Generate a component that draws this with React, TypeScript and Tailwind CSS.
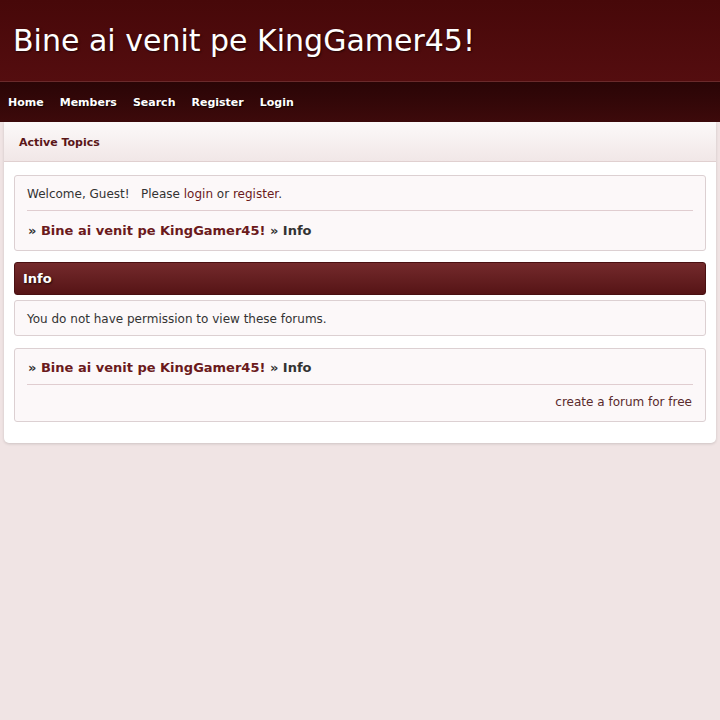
import React from "react";

const Breadcrumb = () => (
  <div className="text-[13px] font-bold text-[#333] leading-[16px]">
    » <a className="text-[#6b1a1c]">Bine ai venit pe KingGamer45!</a> » Info
  </div>
);

const App = () => {
  return (
    <div className="min-h-[720px] bg-[#f0e4e4] font-['DejaVu_Sans',sans-serif]">
      <div className="h-[82px] bg-gradient-to-b from-[#470809] to-[#540d0f] border-b border-[#6a2a2b] flex items-center px-[13px]">
        <h1 className="text-[30px] text-white leading-none pt-[1px] [text-shadow:1px_1px_2px_rgba(0,0,0,0.6)]">
          Bine ai venit pe KingGamer45!
        </h1>
      </div>
      <nav className="h-[40px] bg-gradient-to-b from-[#2a0506] to-[#3d0a0b] flex items-center gap-[16px] px-[8px] pt-[2px]">
        {["Home", "Members", "Search", "Register", "Login"].map((n) => (
          <a key={n} className="text-[11px] font-bold text-white [text-shadow:1px_1px_1px_rgba(0,0,0,0.8)]">
            {n}
          </a>
        ))}
      </nav>
      <div className="mx-[4px] bg-white rounded-b-[5px] shadow-[0_1px_3px_rgba(0,0,0,0.15)] pb-[21px]">
        <div className="h-[40px] bg-gradient-to-b from-[#fcf9f9] to-[#f1e7e7] border-b border-[#e0d0d0] flex items-center px-[15px] pt-[3px]">
          <span className="text-[11px] font-bold text-[#5a1618]">Active Topics</span>
        </div>
        <div className="px-[10px] pt-[13px] flex flex-col">
          <div className="bg-[#fcf8f9] border border-[#dcd0d2] rounded-[3px] px-[12px] pt-[10px] pb-[11px]">
            <div className="text-[12px] text-[#333] leading-[16px]">
              Welcome, Guest!&nbsp;&nbsp; Please <a className="text-[#6b1a1c]">login</a> or{" "}
              <a className="text-[#6b1a1c]">register</a>.
            </div>
            <div className="border-t border-[#e0cdd0] mt-[8px] mb-[12px]" />
            <div className="pl-[1px]">
              <Breadcrumb />
            </div>
          </div>
          <div className="mt-[11px] h-[33px] rounded-[3px] bg-gradient-to-b from-[#742a2c] to-[#561416] border border-[#4a1012] flex items-center px-[8px]">
            <span className="text-[13px] font-bold text-white [text-shadow:1px_1px_2px_rgba(0,0,0,0.7)]">Info</span>
          </div>
          <div className="mt-[5px] h-[36px] bg-[#fcf8f9] border border-[#dcd0d2] rounded-[3px] flex items-center px-[12px] pt-[1px]">
            <span className="text-[12px] text-[#333]">You do not have permission to view these forums.</span>
          </div>
          <div className="mt-[12px] bg-[#fcf8f9] border border-[#dcd0d2] rounded-[3px] px-[12px] pt-[11px] pb-[11px]">
            <div className="pl-[1px]">
              <Breadcrumb />
            </div>
            <div className="border-t border-[#e0cdd0] mt-[8px] mb-[9px]" />
            <div className="text-right text-[12px] text-[#5a2a2c] pr-[1px] leading-[16px]">create a forum for free</div>
          </div>
        </div>
      </div>
    </div>
  );
};

export default App;
